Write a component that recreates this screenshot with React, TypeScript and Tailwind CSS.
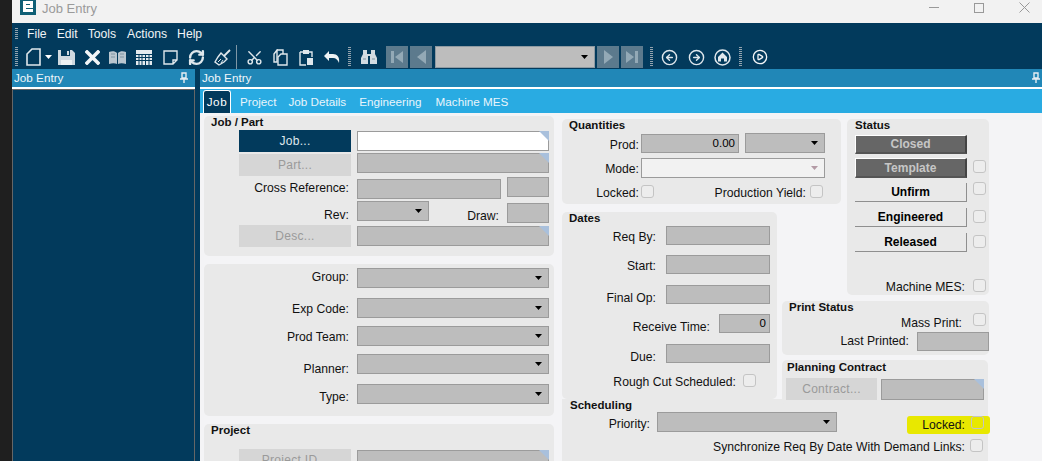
import React from "react";
import { CircleArrowLeft, CircleArrowRight, CirclePlay, RefreshCw, Scissors } from "lucide-react";

const ink = "#dfe7ec";

function Grip({ h = 20 }: { h?: number }) {
  return (
    <svg width="3" height={h} className="block">
      <line x1="1.5" y1="0" x2="1.5" y2={h} stroke="#93a3ae" strokeWidth="3" strokeDasharray="1 1" />
    </svg>
  );
}

function Slot({ w, children }: { w: string; children?: React.ReactNode }) {
  return <div className={`flex items-center justify-center shrink-0 ${w}`}>{children}</div>;
}

function Pin() {
  return (
    <svg width="10" height="12" viewBox="0 0 10 12" className="block">
      <path d="M3 1h4v5H3z M1 7h8 M5 7v4" fill="none" stroke="#e6eef3" strokeWidth="1.4" />
    </svg>
  );
}

function Arrow({ c = "#000" }: { c?: string }) {
  return (
    <svg width="7" height="4" viewBox="0 0 7 4" className="block">
      <path d="M0 0h7L3.5 4z" fill={c} />
    </svg>
  );
}

function Field({
  cls,
  text,
  corner,
  white,
  select,
  light,
}: {
  cls: string;
  text?: string;
  corner?: boolean;
  white?: boolean;
  select?: boolean;
  light?: boolean;
}) {
  const bg = white ? "bg-white" : light ? "bg-[#f2f2f2]" : "bg-[#bdbdbd]";
  return (
    <div
      className={`relative shrink-0 border border-[#9b9b9b] flex items-center justify-end pr-[3px] text-[11.5px] leading-none ${bg} ${cls}`}
    >
      {text}
      {select && (
        <span className="mr-[3px]">
          <Arrow c={light ? "#b39aa5" : "#000"} />
        </span>
      )}
      {corner && (
        <svg width="10" height="10" viewBox="0 0 10 10" className="absolute top-[-1px] right-[-1px]">
          <path d="M0 0h10v10z" fill="#a9c0dc" />
        </svg>
      )}
    </div>
  );
}

function Check({ cls = "" }: { cls?: string }) {
  return <div className={`w-[13px] h-[13px] shrink-0 rounded-[3px] border border-[#c4c4c4] bg-[#ededed] ${cls}`} />;
}

function Label({ cls, children }: { cls: string; children: React.ReactNode }) {
  return <div className={`shrink-0 text-right text-[12.2px] leading-[16px] whitespace-nowrap text-[#111] ${cls}`}>{children}</div>;
}

function Title({ cls, children }: { cls: string; children: React.ReactNode }) {
  return <div className={`text-[11.5px] font-bold leading-[12px] text-[#111] whitespace-nowrap ${cls}`}>{children}</div>;
}

function Btn({ cls, children, active, w = "w-[112px]" }: { cls: string; children: React.ReactNode; active?: boolean; w?: string }) {
  return (
    <div
      className={`shrink-0 h-[22px] flex items-center justify-center text-[12px] tracking-[0.3px] ${w} ${
        active ? "bg-[#023a5c] text-[#dfe7ec]" : "bg-[#d6d6d6] text-[#9a9a9a]"
      } ${cls}`}
    >
      {children}
    </div>
  );
}

function StatusBtn({ cls = "", dark, children }: { cls?: string; dark?: boolean; children: React.ReactNode }) {
  return (
    <div
      className={`shrink-0 w-[112px] flex items-center justify-center text-[12px] font-bold ${
        dark
          ? "bg-[#666666] text-[#c6c6c6] border-t border-l border-white border-r-2 border-r-[#444] border-b-2 border-b-[#555]"
          : "h-[19px] border-r border-b border-[#8f8f8f] text-black"
      } ${cls}`}
    >
      {children}
    </div>
  );
}

function LeftRow({ cls, labelCls, label, select }: { cls: string; labelCls: string; label: string; select?: boolean }) {
  return (
    <div className={`flex items-start ${cls}`}>
      <Label cls={`w-[145px] ${labelCls}`}>{label}</Label>
      <Field cls="ml-[8px] w-[192px] h-[20px]" select={select} />
    </div>
  );
}

function Toolbar() {
  return (
    <div className="h-[24px] flex items-center">
      <Slot w="w-[9px]"><Grip /></Slot>
      <Slot w="w-[24px]">
        <svg width="15" height="18" viewBox="0 0 15 18"><path d="M6 1h8v16H1V6z" fill="none" stroke={ink} strokeWidth="1.6" /></svg>
      </Slot>
      <Slot w="w-[7px]"><Arrow c="#fff" /></Slot>
      <Slot w="w-[28px]">
        <svg width="17" height="17" viewBox="0 0 17 17">
          <path d="M0 1h14l3 3v12H0z" fill="#cfd9e0" />
          <path d="M3 1h9v6H3z" fill="#023a5c" />
          <path d="M9 2h2v4H9z" fill="#cfd9e0" />
          <path d="M3 11h11v5H3z" fill="#eef2f4" />
        </svg>
      </Slot>
      <Slot w="w-[24px]">
        <svg width="15" height="15" viewBox="0 0 15 15"><path d="M2 2l11 11M13 2L2 13" stroke="#f2f5f7" strokeWidth="3.6" strokeLinecap="square" /></svg>
      </Slot>
      <Slot w="w-[27px]">
        <svg width="17" height="15" viewBox="0 0 17 15">
          <path d="M0 2c3-1 6-1 8 1v11c-2-1-5-1-8 0zM17 2c-3-1-6-1-8 1v11c2-1 5-1 8 0z" fill="#b9c6cf" />
          <path d="M2 4h4M2 7h4M11 4h4M11 7h4" stroke="#7f95a4" strokeWidth="1" />
        </svg>
      </Slot>
      <Slot w="w-[26px]">
        <svg width="16" height="15" viewBox="0 0 16 15">
          <path d="M0 0h16v15H0z" fill="#e4eaee" />
          <path d="M0 4.500h16M0 7.500h16M0 10.500h16M3 4v11M6 4v11M9.500 4v11M13 4v11" stroke="#023a5c" strokeWidth="1" />
        </svg>
      </Slot>
      <Slot w="w-[26px]">
        <svg width="15" height="15" viewBox="0 0 15 15"><path d="M1 1h13v9l-4 4H1z M14 10h-4v4" fill="none" stroke={ink} strokeWidth="1.4" /></svg>
      </Slot>
      <Slot w="w-[26px]"><RefreshCw size={17} strokeWidth={3.4} color={ink} /></Slot>
      <Slot w="w-[26px]">
        <svg width="17" height="17" viewBox="0 0 17 17">
          <path d="M10 7l6-6" stroke={ink} strokeWidth="1.8" />
          <path d="M7 4l6 6-3 3-5 3-4-3 3-5z" fill="none" stroke={ink} strokeWidth="1.4" />
          <path d="M4 13l3-3M7 14l2-3" stroke={ink} strokeWidth="1" />
        </svg>
      </Slot>
      <Slot w="w-[6px]"><div className="w-px h-[24px] mr-[3px] bg-[#7f97a6]" /></Slot>
      <Slot w="w-[26px]"><Scissors size={17} strokeWidth={2} color={ink} className="-rotate-90" /></Slot>
      <Slot w="w-[26px]">
        <svg width="15" height="17" viewBox="0 0 15 17">
          <path d="M4 1h6v4M1 5l3-4v12H1z" fill="none" stroke={ink} strokeWidth="1.4" />
          <path d="M8 5h6v11H5V8z" fill="#023a5c" stroke={ink} strokeWidth="1.4" />
        </svg>
      </Slot>
      <Slot w="w-[26px]">
        <svg width="15" height="17" viewBox="0 0 15 17">
          <path d="M1 3h12v5M1 3v13h6" fill="none" stroke={ink} strokeWidth="1.4" />
          <path d="M4 1h6v4H4z" fill={ink} />
          <path d="M8 9h6v7H8z" fill={ink} />
        </svg>
      </Slot>
      <Slot w="w-[26px]">
        <svg width="16" height="13" viewBox="0 0 16 13"><path d="M0 5l5-5v3h4c4 0 7 3 6 9-1-3-3-5-6-5H5v3z" fill="#eef2f4" /></svg>
      </Slot>
      <Slot w="w-[8px]"><Grip /></Slot>
      <Slot w="w-[32px]">
        <svg width="16" height="14" viewBox="0 0 16 14">
          <path d="M2 0h4v4h4V0h4v4l2 4v6H9V6H7v8H0V8l2-4z" fill="#d3dce2" />
          <path d="M2 9h3M11 9h3" stroke="#7f95a4" />
        </svg>
      </Slot>
      <div className="ml-px flex items-center gap-[2px]">
        <div className="w-[22px] h-[22px] bg-[#5c7a8d] flex items-center justify-center">
          <svg width="12" height="12" viewBox="0 0 12 12"><path d="M0 0h3v12H0zM12 0v12L4 6z" fill="#93a9b6" /></svg>
        </div>
        <div className="w-[22px] h-[22px] bg-[#5c7a8d] flex items-center justify-center">
          <svg width="9" height="14" viewBox="0 0 9 14"><path d="M9 0v14L0 7z" fill="#93a9b6" /></svg>
        </div>
        <div className="ml-px w-[160px] h-[22px] bg-[#bdbdbd] border border-[#8f9ba3] flex items-center justify-end pr-[6px]"><Arrow /></div>
        <div className="w-[22px] h-[22px] bg-[#5c7a8d] flex items-center justify-center">
          <svg width="9" height="14" viewBox="0 0 9 14"><path d="M0 0v14l9-7z" fill="#93a9b6" /></svg>
        </div>
        <div className="w-[22px] h-[22px] bg-[#5c7a8d] flex items-center justify-center">
          <svg width="12" height="12" viewBox="0 0 12 12"><path d="M12 0H9v12h3zM0 0v12l8-6z" fill="#93a9b6" /></svg>
        </div>
      </div>
      <Slot w="w-[16px]"><Grip /></Slot>
      <Slot w="w-[21px]"><CircleArrowLeft size={17} strokeWidth={2} color={ink} /></Slot>
      <Slot w="w-[3px]" />
      <Slot w="w-[26px]"><CircleArrowRight size={17} strokeWidth={2} color={ink} /></Slot>
      <Slot w="w-[26px]">
        <svg width="17" height="17" viewBox="0 0 17 17">
          <circle cx="8.500" cy="8.500" r="7.500" fill="none" stroke={ink} strokeWidth="1.5" />
          <path d="M8.500 3.500L13 8v4.500H10v-3H7v3H4V8z" fill={ink} />
        </svg>
      </Slot>
      <Slot w="w-[10px]"><Grip /></Slot>
      <Slot w="w-[29px]"><CirclePlay size={16} strokeWidth={2} color="#f2f5f7" /></Slot>
    </div>
  );
}

export default function App() {
  return (
    <div className="h-[461px] w-[1042px] overflow-hidden flex bg-[#1f1f1f] font-['Liberation_Sans',Arial,sans-serif]">
      <div className="w-[12px] shrink-0" />
      <div className="flex-1 min-w-0 flex flex-col">
        {/* title bar */}
        <div className="h-[23px] shrink-0 bg-[#f2f2f2] flex items-center">
          <svg width="16" height="15" viewBox="0 0 16 15" className="ml-[8px] mb-[8px]">
            <path d="M0 0h16v15H0z" fill="#0f5f76" />
            <path d="M3 1h10v7H6v1h7v3H3zM6 4v1h4V4z" fill="#fff" />
          </svg>
          <div className="ml-[6px] mb-[7px] text-[13px] leading-none text-[#9a9a9a]">Job Entry</div>
          <div className="ml-auto mb-[8px] flex items-center">
            <div className="w-[10px] h-px bg-[#999]" />
            <div className="ml-[35px] w-[10px] h-[10px] border border-[#999]" />
            <svg width="11" height="11" viewBox="0 0 11 11" className="ml-[35px] mr-[12px]">
              <path d="M.5.500l10 10M10.500.500l-10 10" stroke="#999" />
            </svg>
          </div>
        </div>
        {/* menu and toolbar */}
        <div className="h-[46px] shrink-0 bg-[#023a5c] flex flex-col">
          <div className="h-[22px] flex items-center text-[12.2px] text-[#f0f4f6]">
            <div className="ml-[3px] w-[3px]"><Grip h={12} /></div>
            <span className="ml-[9px]">File</span>
            <span className="ml-[10px]">Edit</span>
            <span className="ml-[10px]">Tools</span>
            <span className="ml-[11px]">Actions</span>
            <span className="ml-[10px]">Help</span>
          </div>
          <Toolbar />
        </div>
        {/* body */}
        <div className="flex-1 min-h-0 flex">
          <div className="w-[183px] shrink-0 flex flex-col">
            <div className="h-[18px] bg-[#2187b7] flex items-center justify-between pl-[2px] pr-[6px] text-[11.7px] text-[#f0f6fa]">
              <span>Job Entry</span>
              <Pin />
            </div>
            <div className="h-[2px] bg-white" />
            <div className="flex-1 bg-[#023a5c] border border-[#666] border-b-0" />
          </div>
          <div className="w-[5px] shrink-0 bg-[#023a5c]" />
          <div className="flex-1 min-w-0 flex flex-col bg-[#f4f4f6]">
            <div className="h-[18px] shrink-0 bg-[#2187b7] flex items-center justify-between pl-[2px] pr-[1px] text-[11.7px] text-[#f0f6fa]">
              <span>Job Entry</span>
              <Pin />
            </div>
            <div className="h-[2px] shrink-0 bg-white" />
            {/* tabs */}
            <div className="h-[24px] shrink-0 bg-[#29abe2] flex items-end text-[11.7px] text-[#e8f5fc]">
              <div className="ml-[3px] w-[28px] h-[23px] mb-0 bg-[#023a5c] border border-b-0 border-white rounded-t-[3px] flex items-center justify-center tracking-[0.6px] text-white">Job</div>
              <span className="ml-[9px] mb-[3px] leading-[16px]">Project</span>
              <span className="ml-[12px] mb-[3px] leading-[16px]">Job Details</span>
              <span className="ml-[13px] mb-[3px] leading-[16px]">Engineering</span>
              <span className="ml-[14px] mb-[3px] leading-[16px]">Machine MES</span>
            </div>
            {/* content */}
            <div className="flex-1 min-h-0 overflow-hidden flex items-start pl-[4px] pt-[3px]">
              {/* left column */}
              <div className="w-[350px] shrink-0 flex flex-col gap-[8px]">
                <div className="h-[140px] rounded-[5px] bg-[#e9e9e9]">
                  <Title cls="h-[14px] pl-[7px]">Job / Part</Title>
                  <div className="flex items-start h-[23px] pl-[35px]">
                    <Btn active cls="">Job...</Btn>
                    <Field white corner cls="ml-[6px] mt-[1px] w-[192px] h-[20px]" />
                  </div>
                  <div className="flex items-start h-[24px] pl-[35px]">
                    <Btn cls="mt-[1px]">Part...</Btn>
                    <Field corner cls="ml-[6px] w-[192px] h-[20px]" />
                  </div>
                  <div className="flex items-start h-[24px]">
                    <Label cls="w-[145px] mt-[3px]">Cross Reference:</Label>
                    <Field cls="ml-[8px] mt-[2px] w-[144px] h-[20px]" />
                    <Field cls="ml-[6px] w-[42px] h-[20px]" />
                  </div>
                  <div className="flex items-start h-[24px]">
                    <Label cls="w-[145px] mt-[6px]">Rev:</Label>
                    <Field select cls="ml-[8px] w-[72px] h-[20px]" />
                    <Label cls="w-[70px] mt-[7px]">Draw:</Label>
                    <Field cls="ml-[8px] mt-[2px] w-[42px] h-[20px]" />
                  </div>
                  <div className="flex items-start pl-[35px]">
                    <Btn cls="">Desc...</Btn>
                    <Field corner cls="ml-[6px] mt-[1px] w-[192px] h-[20px]" />
                  </div>
                </div>
                <div className="h-[152px] rounded-[5px] bg-[#e9e9e9] pt-[4px]">
                  <LeftRow select cls="h-[30px]" labelCls="mt-[1px]" label="Group:" />
                  <LeftRow select cls="h-[28px]" labelCls="mt-[3px]" label="Exp Code:" />
                  <LeftRow select cls="h-[28px]" labelCls="mt-[3px]" label="Prod Team:" />
                  <LeftRow select cls="h-[30px]" labelCls="mt-[7px]" label="Planner:" />
                  <LeftRow select cls="h-[20px]" labelCls="mt-[5px]" label="Type:" />
                </div>
                <div className="h-[60px] rounded-[5px] bg-[#e9e9e9]">
                  <Title cls="h-[25px] pl-[7px]">Project</Title>
                  <div className="flex items-start pl-[35px]">
                    <Btn cls="">Project ID...</Btn>
                    <Field corner cls="ml-[6px] mt-[1px] w-[192px] h-[20px]" />
                  </div>
                </div>
              </div>

              {/* right region */}
              <div className="ml-[8px] mt-[3px] grid grid-cols-[220px_59px_6px_142px] grid-rows-[85px_8px_83px_6px_54px_5px_39px_6px_56px]">
                <div className="col-start-1 col-end-3 row-start-1 row-end-2 rounded-[5px] bg-[#e9e9e9]">
                  <Title cls="h-[14px] pl-[7px]">Quantities</Title>
                  <div className="flex items-start h-[25px]">
                    <Label cls="w-[77px] mt-[4px]">Prod:</Label>
                    <Field text="0.00" cls="ml-[2px] mt-[1px] w-[98px] h-[19px]" />
                    <Field select cls="ml-[6px] w-[80px] h-[20px]" />
                  </div>
                  <div className="flex items-start h-[26px]">
                    <Label cls="w-[77px] mt-[3px]">Mode:</Label>
                    <Field light select cls="ml-[2px] w-[184px] h-[20px]" />
                  </div>
                  <div className="flex items-start">
                    <Label cls="w-[77px] mt-[1px]">Locked:</Label>
                    <Check cls="ml-[2px] mt-[1px]" />
                    <Label cls="w-[152px] mt-[1px]">Production Yield:</Label>
                    <Check cls="ml-[4px] mt-[1px]" />
                  </div>
                </div>

                <div className="col-start-4 col-end-5 row-start-1 row-end-4 rounded-[5px] bg-[#e9e9e9] pl-[8px]">
                  <Title cls="h-[16px]">Status</Title>
                  <div className="h-[23px] flex items-start">
                    <StatusBtn dark cls="h-[19px]">Closed</StatusBtn>
                  </div>
                  <div className="h-[24px] flex items-start">
                    <StatusBtn dark cls="h-[20px]">Template</StatusBtn>
                    <Check cls="ml-[6px] mt-[2px]" />
                  </div>
                  <div className="h-[26px] flex items-start">
                    <StatusBtn cls="mt-[1px]">Unfirm</StatusBtn>
                    <Check cls="ml-[6px]" />
                  </div>
                  <div className="h-[25px] flex items-start">
                    <StatusBtn>Engineered</StatusBtn>
                    <Check cls="ml-[6px] mt-[2px]" />
                  </div>
                  <div className="h-[46px] flex items-start">
                    <StatusBtn>Released</StatusBtn>
                    <Check cls="ml-[6px] mt-[2px]" />
                  </div>
                  <div className="flex items-start">
                    <Label cls="w-[110px]">Machine MES:</Label>
                    <Check cls="ml-[8px]" />
                  </div>
                </div>

                <div className="col-start-1 col-end-2 row-start-3 row-end-8 mr-[5px] rounded-[5px] bg-[#e9e9e9]">
                  <Title cls="h-[14px] pl-[7px]">Dates</Title>
                  <div className="flex items-start h-[29px]">
                    <Label cls="w-[94px] mt-[3px]">Req By:</Label>
                    <Field cls="ml-[10px] w-[104px] h-[19px]" />
                  </div>
                  <div className="flex items-start h-[30px]">
                    <Label cls="w-[94px] mt-[3px]">Start:</Label>
                    <Field cls="ml-[10px] w-[104px] h-[19px]" />
                  </div>
                  <div className="flex items-start h-[29px]">
                    <Label cls="w-[94px] mt-[5px]">Final Op:</Label>
                    <Field cls="ml-[10px] w-[104px] h-[19px]" />
                  </div>
                  <div className="flex items-start h-[30px]">
                    <Label cls="w-[148px] mt-[5px]">Receive Time:</Label>
                    <Field text="0" cls="ml-[9px] w-[51px] h-[19px]" />
                  </div>
                  <div className="flex items-start h-[30px]">
                    <Label cls="w-[94px] mt-[5px]">Due:</Label>
                    <Field cls="ml-[10px] w-[104px] h-[19px]" />
                  </div>
                  <div className="flex items-start">
                    <Label cls="w-[174px]">Rough Cut Scheduled:</Label>
                    <Check cls="ml-[7px]" />
                  </div>
                </div>

                <div className="col-start-2 col-end-5 row-start-5 row-end-6 rounded-[5px] bg-[#e9e9e9]">
                  <Title cls="h-[12px] pl-[7px]">Print Status</Title>
                  <div className="flex items-start h-[19px]">
                    <Label cls="w-[180px] mt-[2px]">Mass Print:</Label>
                    <Check cls="ml-[11px]" />
                  </div>
                  <div className="flex items-start">
                    <Label cls="w-[127px] mt-[1px]">Last Printed:</Label>
                    <Field cls="ml-[8px] w-[72px] h-[19px]" />
                  </div>
                </div>

                <div className="col-start-1 col-end-5 row-start-8 row-end-10 mr-[1px] bg-[#e9e9e9]">
                  <Title cls="h-[13px] pl-[8px]">Scheduling</Title>
                  <div className="flex items-start h-[27px]">
                    <Label cls="w-[88px] mt-[4px]">Priority:</Label>
                    <Field select cls="ml-[7px] w-[180px] h-[20px]" />
                    <div className="ml-[70px] mt-[4px] w-[84px] h-[18px] mr-[-2px] rounded-[3px] bg-[#e8e800] flex items-start">
                      <Label cls="w-[58px] mt-[1px]">Locked:</Label>
                      <Check cls="ml-[6px] bg-transparent border-[#b8b84a]" />
                    </div>
                  </div>
                  <div className="flex items-start">
                    <Label cls="w-[403px]">Synchronize Req By Date With Demand Links:</Label>
                    <Check cls="ml-[5px]" />
                  </div>
                </div>

                <div className="col-start-2 col-end-5 row-start-7 row-end-9 mr-[1px] rounded-[5px] bg-[#e9e9e9]">
                  <Title cls="h-[18px] pl-[5px] pt-[1px]">Planning Contract</Title>
                  <div className="flex items-start pl-[4px]">
                    <Btn w="w-[91px]" cls="">Contract...</Btn>
                    <Field corner cls="ml-[4px] mt-[1px] w-[103px] h-[21px]" />
                  </div>
                </div>
              </div>
            </div>
          </div>
        </div>
      </div>
    </div>
  );
}
